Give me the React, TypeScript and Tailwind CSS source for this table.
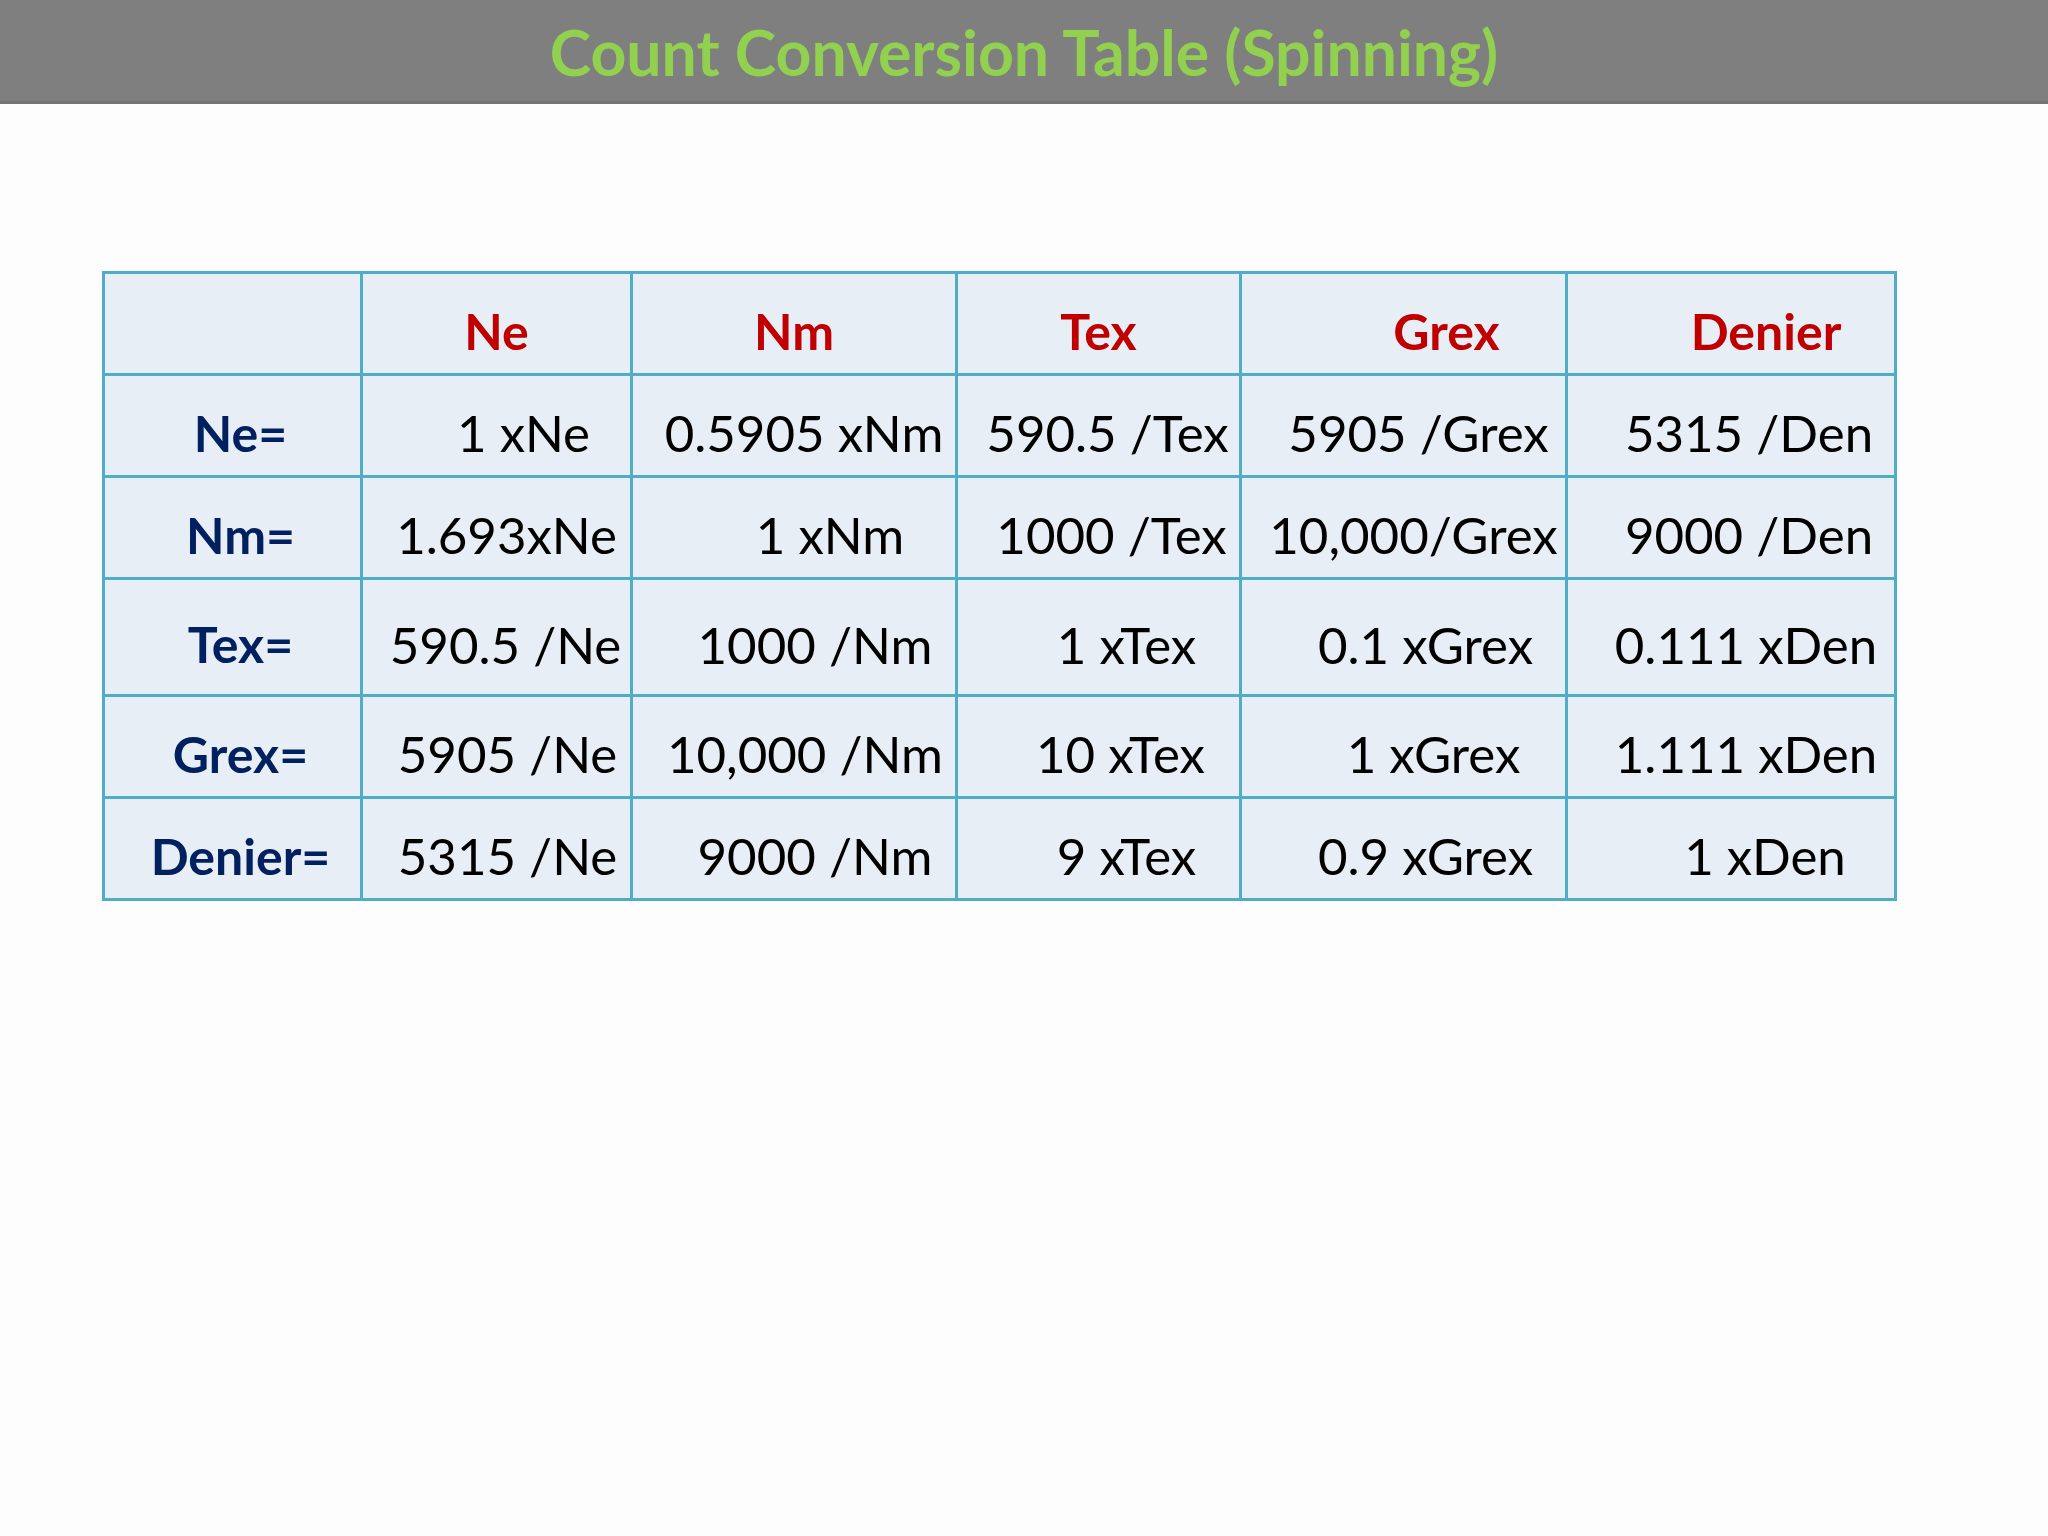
import React from "react";

type Cell = { t: string; pl: string };

const header: Cell[] = [
  { t: "", pl: "" },
  { t: "Ne", pl: "" },
  { t: "Nm", pl: "" },
  { t: "Tex", pl: "" },
  { t: "Grex", pl: "pl-[86px]" },
  { t: "Denier", pl: "pl-[70px]" },
];

const rows: { label: string; h: string; cells: Cell[] }[] = [
  {
    label: "Ne=",
    h: "h-[102px]",
    cells: [
      { t: "1 xNe", pl: "pl-[54px]" },
      { t: "0.5905 xNm", pl: "pl-[20px]" },
      { t: "590.5 /Tex", pl: "pl-[18px]" },
      { t: "5905 /Grex", pl: "pl-[30px]" },
      { t: "5315 /Den", pl: "pl-[36px]" },
    ],
  },
  {
    label: "Nm=",
    h: "h-[102px]",
    cells: [
      { t: "1.693xNe", pl: "pl-[20px]" },
      { t: "1 xNm", pl: "pl-[72px]" },
      { t: "1000 /Tex", pl: "pl-[26px]" },
      { t: "10,000/Grex", pl: "pl-[20px]" },
      { t: "9000 /Den", pl: "pl-[36px]" },
    ],
  },
  {
    label: "Tex=",
    h: "h-[117px]",
    cells: [
      { t: "590.5 /Ne", pl: "pl-[18px]" },
      { t: "1000 /Nm", pl: "pl-[42px]" },
      { t: "1 xTex", pl: "pl-[56px]" },
      { t: "0.1 xGrex", pl: "pl-[44px]" },
      { t: "0.111 xDen", pl: "pl-[30px]" },
    ],
  },
  {
    label: "Grex=",
    h: "h-[102px]",
    cells: [
      { t: "5905 /Ne", pl: "pl-[22px]" },
      { t: "10,000 /Nm", pl: "pl-[22px]" },
      { t: "10 xTex", pl: "pl-[44px]" },
      { t: "1 xGrex", pl: "pl-[60px]" },
      { t: "1.111 xDen", pl: "pl-[30px]" },
    ],
  },
  {
    label: "Denier=",
    h: "h-[102px]",
    cells: [
      { t: "5315 /Ne", pl: "pl-[22px]" },
      { t: "9000 /Nm", pl: "pl-[42px]" },
      { t: "9 xTex", pl: "pl-[56px]" },
      { t: "0.9 xGrex", pl: "pl-[44px]" },
      { t: "1 xDen", pl: "pl-[68px]" },
    ],
  },
];

const widths = ["w-[258px]", "w-[270px]", "w-[325px]", "w-[284px]", "w-[326px]", "w-[329px]"];

export default function App() {
  return (
    <div
      className="w-[2048px] h-[1536px] bg-[#fdfdfd] overflow-hidden"
      style={{ fontFamily: "Lato, 'Open Sans', sans-serif" }}
    >
      <div className="h-[104px] bg-[#7f7f7f] border-b-[3px] border-[#747474] flex items-center justify-center">
        <h1 className="text-[62.5px] font-bold text-[#92d050] leading-none pt-[4px] whitespace-nowrap">
          Count Conversion Table (Spinning)
        </h1>
      </div>

      <div className="mt-[167px] ml-[102px] w-fit border-l-[3px] border-t-[3px] border-[#4fadc8] bg-[#e8eef5]">
        <div className="flex h-[102px]">
          {header.map((c, i) => (
            <div
              key={i}
              className={`${widths[i]} ${c.pl} h-full border-r-[3px] border-b-[3px] border-[#4fadc8] flex items-center justify-center pt-[14px] text-[50px] font-bold text-[#c00000] leading-none whitespace-nowrap`}
            >
              {c.t}
            </div>
          ))}
        </div>
        {rows.map((r, ri) => (
          <div key={ri} className={`flex ${r.h}`}>
            <div
              className={`${widths[0]} pl-[16px] h-full border-r-[3px] border-b-[3px] border-[#4fadc8] flex items-center justify-center pt-[14px] text-[50px] font-bold text-[#002060] leading-none whitespace-nowrap`}
            >
              {r.label}
            </div>
            {r.cells.map((c, ci) => (
              <div
                key={ci}
                className={`${widths[ci + 1]} ${c.pl} h-full border-r-[3px] border-b-[3px] border-[#4fadc8] flex items-center justify-center pt-[14px] text-[51px] text-black leading-none whitespace-nowrap`}
              >
                {c.t}
              </div>
            ))}
          </div>
        ))}
      </div>
    </div>
  );
}
